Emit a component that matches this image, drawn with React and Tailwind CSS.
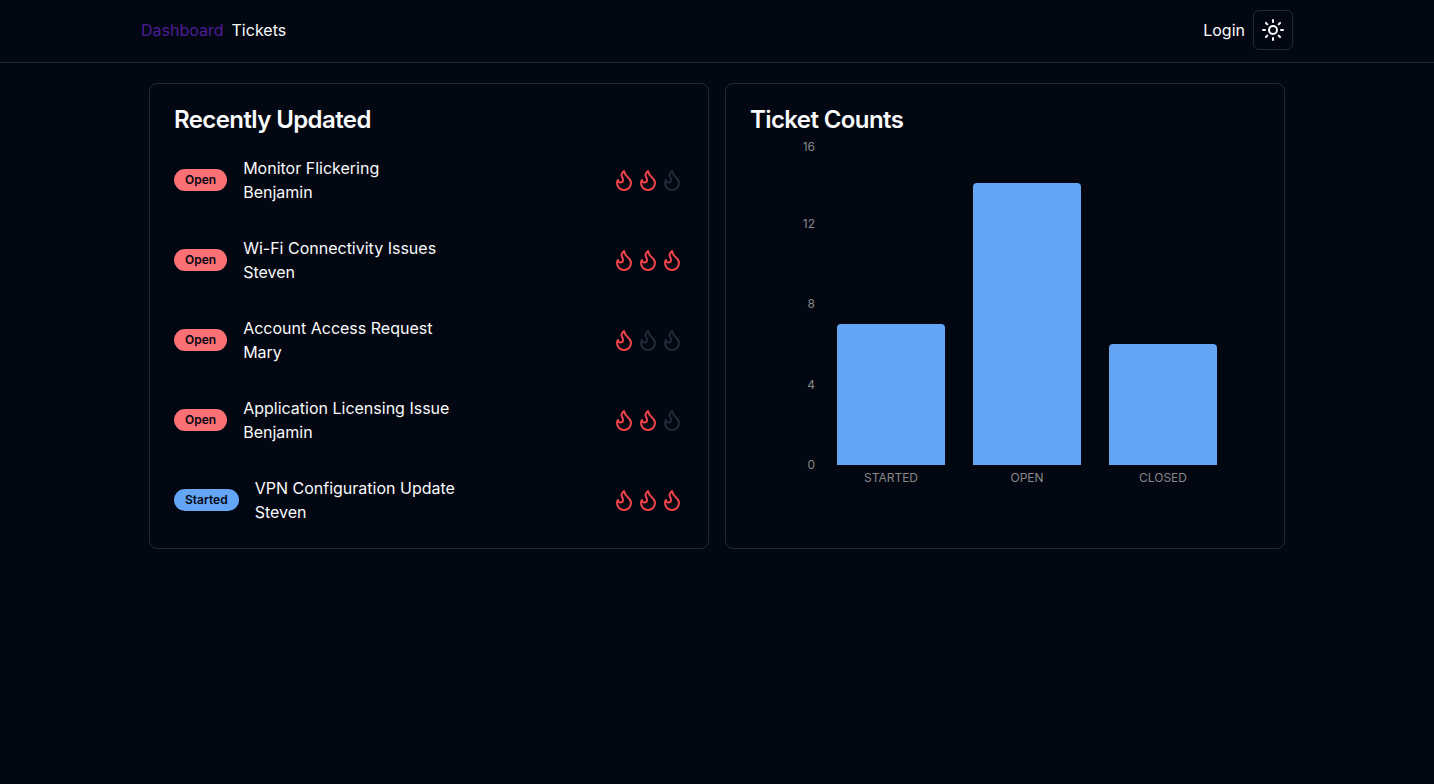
import { Sun } from "lucide-react";

const tickets = [
  { title: "Monitor Flickering", owner: "Benjamin", status: "Open", priority: 2 },
  { title: "Wi-Fi Connectivity Issues", owner: "Steven", status: "Open", priority: 3 },
  { title: "Account Access Request", owner: "Mary", status: "Open", priority: 1 },
  { title: "Application Licensing Issue", owner: "Benjamin", status: "Open", priority: 2 },
  { title: "VPN Configuration Update", owner: "Steven", status: "Started", priority: 3 },
];

const badgeColors = { Open: "bg-[#fa7074]", Started: "bg-[#64a5f6]" };

const counts = [
  { name: "STARTED", total: 7 },
  { name: "OPEN", total: 14 },
  { name: "CLOSED", total: 6 },
];
const maxCount = 16;

function Card({ title, children }) {
  return (
    <section className="rounded-lg border border-[#1f2937] p-6">
      <h2 className="text-2xl leading-none font-semibold tracking-tight">{title}</h2>
      {children}
    </section>
  );
}

function Flame({ lit }) {
  return (
    <svg
      viewBox="0 0 24 24"
      fill="none"
      stroke="currentColor"
      strokeWidth="2"
      strokeLinecap="round"
      strokeLinejoin="round"
      className={lit ? "size-6 text-[#f04248]" : "size-6 text-[#1f2937]"}
    >
      <path d="M8.5 14.5A2.5 2.5 0 0 0 11 12c0-1.38-.5-2-1-3-1.072-2.143-.224-4.054 2-6 .5 2.5 2 4.9 4 6.5 2 1.6 3 3.5 3 5.5a7 7 0 1 1-14 0c0-1.153.433-2.294 1-3a2.5 2.5 0 0 0 2.5 2.5z" />
    </svg>
  );
}

function Priority({ level }) {
  return (
    <div className="flex" role="img" aria-label={`Priority ${level} of 3`}>
      {[1, 2, 3].map((n) => (
        <Flame key={n} lit={n <= level} />
      ))}
    </div>
  );
}

function CountChart() {
  return (
    <div className="flex pr-[29px] pt-[7px] text-xs text-[#888888]">
      <div className="flex w-[65px] flex-col text-right">
        <span className="flex h-4 items-end justify-end">16</span>
        <span className="flex h-[77px] items-end justify-end">12</span>
        <span className="flex h-20 items-end justify-end">8</span>
        <span className="flex h-[81px] items-end justify-end">4</span>
        <span className="flex h-20 items-end justify-end">0</span>
      </div>
      <div className="ml-2 flex-1 pt-1">
        <div className="flex h-[322px] items-end gap-7 px-3.5">
          {counts.map((c) => (
            <div
              key={c.name}
              className="flex-1 rounded-t bg-[#64a5f6]"
              style={{ height: `${(c.total / maxCount) * 100}%` }}
            />
          ))}
        </div>
        <div className="flex gap-7 px-3.5 pt-[5px]">
          {counts.map((c) => (
            <span key={c.name} className="flex-1 text-center">{c.name}</span>
          ))}
        </div>
      </div>
    </div>
  );
}

export default function App() {
  return (
    <div className="min-h-screen bg-[#030712] font-['Inter',sans-serif] text-base text-[#f9fafb]">
      <nav className="border-b border-[#1f2937] pt-2.5 pb-3">
        <div className="mx-auto flex max-w-6xl items-center justify-between">
          <div className="flex items-center gap-2">
            <a href="#dashboard" className="text-[#4c1d95]">Dashboard</a>
            <a href="#tickets">Tickets</a>
          </div>
          <div className="flex items-center gap-2">
            <a href="#login">Login</a>
            <button
              type="button"
              aria-label="Toggle theme"
              className="flex size-10 items-center justify-center rounded-md border border-[#1f2937]"
            >
              <Sun size={24} />
            </button>
          </div>
        </div>
      </nav>
      <main className="mx-auto max-w-6xl px-2 pt-5">
        <div className="grid gap-4 md:grid-cols-2">
          <Card title="Recently Updated">
            <ul className="space-y-8 pt-6">
              {tickets.map((t) => (
                <li key={t.title} className="flex items-center justify-between">
                  <div className="flex items-center gap-4">
                    <span
                      className={`rounded-full border border-transparent px-2.5 py-0.5 text-xs font-semibold text-[#030712] ${badgeColors[t.status]}`}
                    >
                      {t.status}
                    </span>
                    <div>
                      <p>{t.title}</p>
                      <p>{t.owner}</p>
                    </div>
                  </div>
                  <Priority level={t.priority} />
                </li>
              ))}
            </ul>
          </Card>
          <Card title="Ticket Counts">
            <CountChart />
          </Card>
        </div>
      </main>
    </div>
  );
}
